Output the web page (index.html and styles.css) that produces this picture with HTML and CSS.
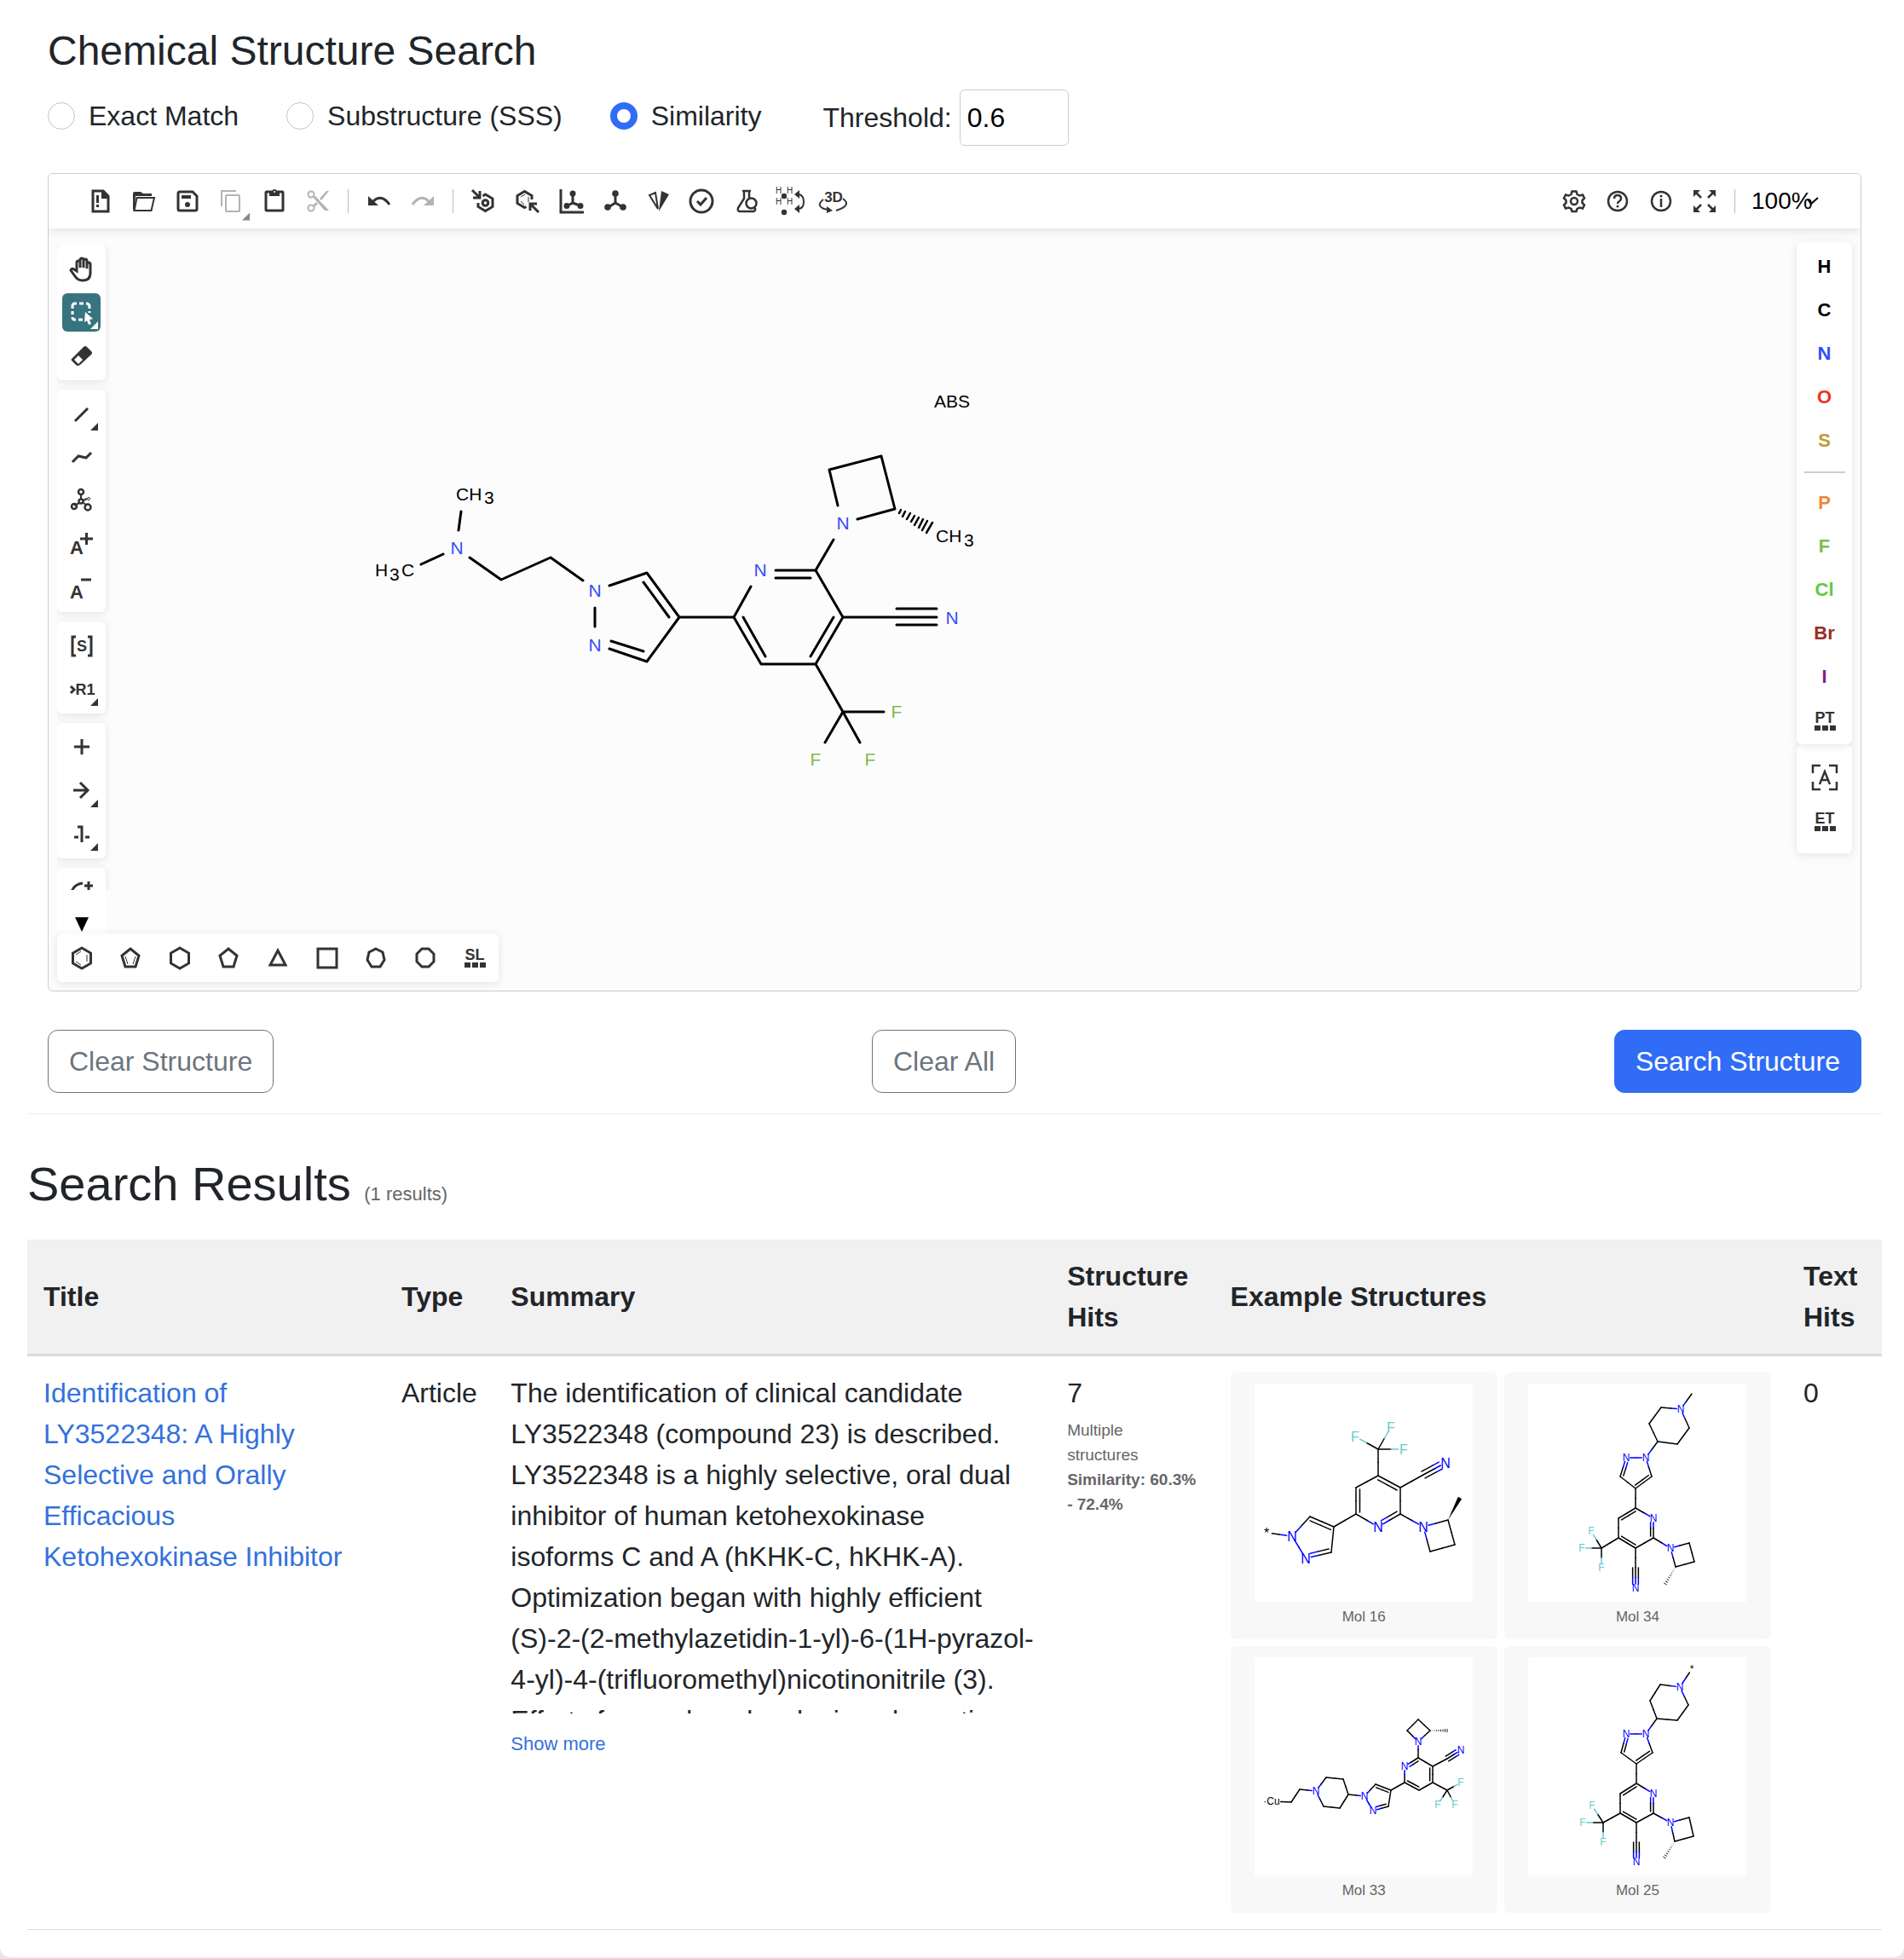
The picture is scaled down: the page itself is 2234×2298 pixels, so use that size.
FILE: index.html
```html
<!DOCTYPE html>
<html lang="en">
<head>
  <meta charset="UTF-8" />
  <meta name="viewport" content="width=device-width, initial-scale=1.0"/>
  <title>Chemical Structure Search</title>
  <link rel="stylesheet" href="styles.css">
</head>
<body>
  <main class="page">
    <section class="search-panel">
      <h2>Chemical Structure Search</h2>

      <div class="search-options">
        <label class="radio-option"><input type="radio" name="searchType" value="exact"> Exact Match</label>
        <label class="radio-option"><input type="radio" name="searchType" value="sss"> Substructure (SSS)</label>
        <label class="radio-option"><input type="radio" name="searchType" value="similarity" checked> Similarity</label>
        <div class="threshold">
          <label for="threshold">Threshold:</label>
          <input type="number" id="threshold" value="0.6" min="0" max="1" step="0.1">
        </div>
      </div>

      <div class="editor">
        <!-- Top toolbar -->
        <div class="toolbar">
          <button class="tool" aria-label="Clear canvas"><svg class="icon" viewBox="0 0 30 30"><path class="line bold" d="M6 3h12l6 6v18H6z"/><path class="solid" d="M16 2v10h9V9l-6-7zM10 8h3v9h-3zM10 19h3v3h-3z"/></svg></button>
          <button class="tool" aria-label="Open"><svg class="icon" viewBox="0 0 30 30"><path class="solid" d="M2 6q0-2 2-2h7l3 2h10v3H5l-1 17q-2 0-2-2z"/><path class="line" d="M6.500 11h20.500l-3.500 15H3.500z"/></svg></button>
          <button class="tool" aria-label="Save"><svg class="icon" viewBox="0 0 30 30"><path class="line bold" d="M6 4h15l5 5v15q0 2-2 2H6q-2 0-2-2V6q0-2 2-2z"/><path class="solid" d="M8 8h11v4H8z"/><circle class="solid" cx="15" cy="19" r="3"/></svg></button>
          <button class="tool has-menu disabled" aria-label="Copy"><svg class="icon" viewBox="0 0 30 30"><path class="line" d="M4 21V3h17M10 8h14q1 0 1 1v17q0 1-1 1H10q-1 0-1-1V9q0-1 1-1z"/></svg></button>
          <button class="tool" aria-label="Paste"><svg class="icon" viewBox="0 0 30 30"><path class="line bold" d="M6 4h18q1 0 1 1v20q0 1-1 1H6q-1 0-1-1V5q0-1 1-1z"/><path class="solid" d="M9 3h3q1-2 3-2t3 2h3v6H9z"/><circle cx="15" cy="4" r="1" fill="#fff"/></svg></button>
          <button class="tool disabled" aria-label="Cut"><svg class="icon" viewBox="0 0 30 30"><circle class="line" cx="7" cy="7" r="3.500"/><circle class="line" cx="7" cy="23" r="3.500"/><path class="solid" d="M9 10l3-1 16 17h-5zM9 20l4-4 2 2-4 4zM17 12l8-9h3L19 14z"/></svg></button>
          <span class="divider"></span>
          <button class="tool" aria-label="Undo"><svg class="icon" viewBox="0 0 30 30"><path class="line bold" d="M8 15q10-9 19 4"/><path class="solid" d="M2 9v11h12z"/></svg></button>
          <button class="tool disabled" aria-label="Redo"><svg class="icon" viewBox="0 0 30 30"><path class="line bold" d="M22 15q-10-9-19 4"/><path class="solid" d="M28 9v11H16z"/></svg></button>
          <span class="divider"></span>
          <button class="tool" aria-label="Layout"><svg class="icon" viewBox="0 0 30 30"><path class="line bold" d="M1 2l8 8M10 3v8H2M8 17v4.500l8.500 5 8.500-5v-9.500l-8.500-5-3 2"/><circle class="line bold" cx="16.500" cy="17" r="3.300"/></svg></button>
          <button class="tool" aria-label="Clean up"><svg class="icon" viewBox="0 0 30 30"><path class="line bold" d="M20 13V8.500l-8.500-5-8.500 5v9l8.500 5 2-1M28 28l-9-9M18 26v-8h8"/><path class="line thin" d="M7 10l5-3M7 15l4 4M16 10v6"/></svg></button>
          <button class="tool" aria-label="Aromatize"><svg class="icon" viewBox="0 0 30 30"><path class="line bold" d="M3 1v27h27M17 7v10l-6 3M17 17l8 3"/><circle class="solid" cx="17" cy="6" r="3.500"/><circle class="solid" cx="10" cy="20.500" r="3.500"/><circle class="solid" cx="26" cy="20.500" r="3.500"/></svg></button>
          <button class="tool" aria-label="Dearomatize"><svg class="icon" viewBox="0 0 30 30"><path class="line bold" d="M16 7v10l-8 5M16 17l9 5"/><circle class="solid" cx="16" cy="6" r="3.800"/><circle class="solid" cx="7" cy="22" r="3.800"/><circle class="solid" cx="25" cy="22" r="3.800"/></svg></button>
          <button class="tool" aria-label="Calculate CIP"><svg class="icon" viewBox="0 0 30 30"><path class="line" d="M5 8l7-3 3 19z"/><path class="solid" d="M19 3l9 4-12 20z"/></svg></button>
          <button class="tool" aria-label="Check structure"><svg class="icon" viewBox="0 0 30 30"><circle class="line bold" cx="15" cy="15" r="13"/><path class="line bold" d="M10 15l4 4 7-8"/></svg></button>
          <button class="tool" aria-label="Calculated values"><svg class="icon" viewBox="0 0 30 30"><path class="line medium" d="M12 3h10M14 3v9L7 23q-1 4 2 4h15q4 0 3-4M20 3v8"/><circle class="line medium" cx="22.500" cy="17.500" r="6"/></svg></button>
          <button class="tool" aria-label="Add or remove explicit hydrogens"><svg class="icon" viewBox="0 0 30 30"><text class="hydrogen" x="0" y="6">H</text><text class="hydrogen" x="13" y="6">H</text><text class="hydrogen" x="0" y="19">H</text><text class="hydrogen" x="13" y="19">H</text><circle class="solid" cx="10" cy="9" r="3.200"/><circle class="solid" cx="10" cy="28" r="3.200"/><path class="line" d="M26 7q7 0 7 8.500T26 24"/><path class="solid" d="M22 7l6-5v10zM22 24l6-5v10z"/></svg></button>
          <button class="tool" aria-label="3D viewer"><svg class="icon" viewBox="0 0 30 30"><text class="glyph" x="17" y="16" font-size="17">3D</text><path class="line" d="M5 13Q-4 20 6 24l5 1M28 12q11 8-8 14"/><path class="solid" d="M9 21l7 5-7 3z"/></svg></button>

          <span class="spacer"></span>

          <button class="tool" aria-label="Settings"><svg class="icon" viewBox="0 0 30 30"><path class="line medium" d="M12.500 3.500h5l1 3.500 3 1.500 3.500-1 2 4-2.500 2.500v3l2.500 2.500-2 4-3.500-1-3 1.500-1 3h-5l-1-3-3-1.500-3.500 1-2-4L5.500 17v-3L3 11.500l2-4 3.500 1 3-1.500z"/><circle class="line medium" cx="15" cy="15" r="4"/></svg></button>
          <button class="tool" aria-label="Help"><svg class="icon" viewBox="0 0 30 30"><circle class="line medium" cx="15" cy="15" r="11"/><path class="line medium" d="M11 12q0-4 4-4t4 4q0 2-2 3t-2 3"/><circle class="solid" cx="15" cy="21" r="1.500"/></svg></button>
          <button class="tool" aria-label="About"><svg class="icon" viewBox="0 0 30 30"><circle class="line medium" cx="15" cy="15" r="11"/><path class="line medium" d="M15 12v10"/><circle class="solid" cx="15" cy="9" r="1.500"/></svg></button>
          <button class="tool" aria-label="Fullscreen"><svg class="icon" viewBox="0 0 30 30"><path class="line medium" d="M4 4l7 7M26 4l-7 7M4 26l7-7M26 26l-7-7"/><path class="solid" d="M2 2h8l-3 3-2 2-3 3zM28 2h-8l8 8zM2 28h8l-8-8zM28 28h-8l8-8z"/></svg></button>
          <span class="divider"></span>
          <div class="zoom">
            <select aria-label="Zoom">
              <option>100%</option>
            </select>
            <svg class="zoom-arrow" viewBox="0 0 14 10"><path class="line" d="M1 3l4 5 8-7"/></svg>
          </div>
        </div>

        <div class="workspace">
          <!-- Left tools -->
          <div class="left-tools">
            <div class="tool-scroll">
              <div class="tool-group">
                <button class="tool" aria-label="Hand"><svg class="icon" viewBox="0 0 30 30"><path class="line bold" d="M9 17V7q0-2 2-2t2 2v6V4q0-2 2-2t2 2v9V5q0-2 2-2t2 2v9V9q0-2 2-2t2 2v10q0 9-9 9-6 0-9-5l-5-7q1-3 4-1z"/></svg></button>
                <button class="tool active has-menu" aria-label="Rectangle selection"><svg class="icon" viewBox="0 0 30 30"><path class="line bold" d="M4 10V7q0-3 3-3h2M12 4h5M20 4q4 0 4 4v2M4 13v4M4 20q0 3 3 3h1M11 23h5M24 13v2"/><path class="solid" d="M19 14l9 8-4 1 2 5-3 1-2-5-3 2z"/></svg></button>
                <button class="tool" aria-label="Erase"><svg class="icon" viewBox="0 0 30 30"><path class="solid" d="M3 18L17 4q2-2 4 0l5 5q2 2 0 4L13 25q-3 2-5 0l-5-5q-1-1 0-2z"/><path d="M6 19l5-5 5 5-5 5z" fill="#fff"/></svg></button>
              </div>
              <div class="tool-group">
                <button class="tool has-menu" aria-label="Single bond"><svg class="icon" viewBox="0 0 30 30"><path class="line bold" d="M7 23L22 8"/></svg></button>
                <button class="tool" aria-label="Chain"><svg class="icon" viewBox="0 0 30 30"><path class="line bold" d="M4 20l7-7 9 2 6-6"/></svg></button>
                <button class="tool" aria-label="Stereochemistry"><svg class="icon" viewBox="0 0 30 30"><path class="line" d="M14 7v6M12 17l-6 3M17 17l4 3M17 14l4-2"/><circle class="line medium" cx="14" cy="4" r="3"/><circle class="line medium" cx="14" cy="15" r="2.500"/><circle class="line medium" cx="6" cy="21" r="3"/><circle class="line medium" cx="22" cy="22" r="3.500"/><circle class="line thin" cx="23" cy="12" r="1.500"/></svg></button>
                <button class="tool" aria-label="Charge plus"><svg class="icon" viewBox="0 0 30 30"><text class="glyph" x="9" y="26" font-size="22">A</text><path class="line bold" d="M13 8h15M20.500 1v14"/></svg></button>
                <button class="tool" aria-label="Charge minus"><svg class="icon" viewBox="0 0 30 30"><text class="glyph" x="9" y="27" font-size="22">A</text><path class="line bold" d="M14 5h12"/></svg></button>
              </div>
              <div class="tool-group">
                <button class="tool" aria-label="S-group"><svg class="icon" viewBox="0 0 30 30"><path class="line bold" d="M8 4H4v22h4M22 4h4v22h-4"/><text class="glyph" x="15" y="21" font-size="18">S</text></svg></button>
                <button class="tool has-menu" aria-label="R-group"><svg class="icon" viewBox="0 0 30 30"><path class="line bold" d="M2 11l4 4-4 4"/><text class="glyph" x="19" y="21" font-size="18">R1</text></svg></button>
              </div>
              <div class="tool-group">
                <button class="tool" aria-label="Reaction plus"><svg class="icon" viewBox="0 0 30 30"><path class="line bold" d="M6 14h18M15 5v18"/></svg></button>
                <button class="tool has-menu" aria-label="Arrow"><svg class="icon" viewBox="0 0 30 30"><path class="line bold" d="M5 14h17M13 5l9 9-9 9"/></svg></button>
                <button class="tool has-menu" aria-label="Reaction mapping"><svg class="icon" viewBox="0 0 30 30"><path class="line bold" d="M6 18h5M19 18h5M10 6h5v18"/></svg></button>
              </div>
              <div class="tool-group">
                <button class="tool" aria-label="Shapes"><svg class="icon" viewBox="0 0 30 30"><path class="line bold" d="M3 14q3-9 13-10M18 7h10M23 2v10"/></svg></button>
              </div>
            </div>
            <button class="scroll-down" aria-label="Scroll down"><svg viewBox="0 0 16 17"><path d="M0 0h16L8 17z"/></svg></button>
          </div>

          <!-- Drawing area -->
          <svg class="canvas">
            <g class="bonds" transform="translate(-130 -268)">
              <path d="M538 622L541 600M494 662L520 650M551 654L588 680L646 654L684 681"/>
              <path d="M715 687L759 672L797 724L759 776L715 761M755 683L785 724M717 752L755 764M698 713V735"/>
              <path d="M797 724H861L881 688M910 669H957L989 724L957 779H893L861 724M910 678H951M978 724L951 770M872 724L898 770"/>
              <path d="M989 724H1099M1052 714H1099M1052 733H1099"/>
              <path d="M957 669L978 633M983 593L973 551L1034 535L1050 597L1006 609"/>
              <path d="M957 779L989 835H1037M989 835L968 871M989 835L1009 871"/>
              <path class="hash" d="M1055 602L1057 598M1059 606L1062 600M1064 609L1068 602M1069 612L1073 605M1073 616L1078 607M1078 619L1083 609M1082 622L1088 611M1087 625L1094 613"/>
            </g>
            <g class="atoms" transform="translate(-130 -268)">
              <text x="535" y="587">CH</text><text x="568" y="591">3</text>
              <text x="440" y="676">H</text><text x="457" y="681">3</text><text x="471" y="676">C</text>
              <text x="1098" y="636">CH</text><text x="1131" y="641">3</text>
              <text x="1096" y="478">ABS</text>
              <g class="nitrogen">
                <text x="536" y="650">N</text>
                <text x="698" y="700">N</text>
                <text x="698" y="764">N</text>
                <text x="892" y="676">N</text>
                <text x="989" y="621">N</text>
                <text x="1117" y="732">N</text>
              </g>
              <g class="fluorine">
                <text x="1052" y="842">F</text>
                <text x="957" y="898">F</text>
                <text x="1021" y="898">F</text>
              </g>
            </g>
          </svg>

          <!-- Atoms -->
          <div class="right-tools">
            <div class="atom-group">
              <button class="tool atom">H</button>
              <button class="tool atom">C</button>
              <button class="tool atom n">N</button>
              <button class="tool atom o">O</button>
              <button class="tool atom s">S</button>
              <hr>
              <button class="tool atom p">P</button>
              <button class="tool atom f">F</button>
              <button class="tool atom cl">Cl</button>
              <button class="tool atom br">Br</button>
              <button class="tool atom i">I</button>
              <button class="tool" aria-label="Periodic table"><svg class="icon" viewBox="0 0 30 30"><text class="glyph" x="15" y="18" font-size="18">PT</text><path class="solid" d="M3 21h7v6H3zM12 21h7v6h-7zM21 21h7v6h-7z"/></svg></button>
            </div>
            <div class="atom-group extended">
              <button class="tool" aria-label="Any atom"><svg class="icon" viewBox="0 0 30 30"><path class="line medium" d="M1 10V1h9M20 1h9v9M1 20v9h9M20 29h9v-9"/><path class="line medium" d="M9 23l6-15 6 15M11 18h8"/></svg></button>
              <button class="tool" aria-label="Extended table"><svg class="icon" viewBox="0 0 30 30"><text class="glyph" x="15" y="18" font-size="18">ET</text><path class="solid" d="M3 21h7v6H3zM12 21h7v6h-7zM21 21h7v6h-7z"/></svg></button>
            </div>
          </div>
        </div>

        <!-- Templates -->
        <div class="templates">
          <button class="tool" aria-label="Benzene"><svg class="icon" viewBox="0 0 30 30"><path class="line bold" d="M15 3l10.500 6v12L15 27 4.500 21V9z"/><path class="line thin" d="M8 11l6-4M21 11v8M14 23l-6-4"/></svg></button>
          <button class="tool" aria-label="Cyclopentadiene"><svg class="icon" viewBox="0 0 30 30"><path class="line bold" d="M15 4l10 8-4 13H9L5 12z"/><path class="line thin" d="M9 13l3 9M21 13l-3 9"/></svg></button>
          <button class="tool" aria-label="Cyclohexane"><svg class="icon" viewBox="0 0 30 30"><path class="line bold" d="M15 3l10.500 6v12L15 27 4.500 21V9z"/></svg></button>
          <button class="tool" aria-label="Cyclopentane"><svg class="icon" viewBox="0 0 30 30"><path class="line bold" d="M15 4l10 8-4 13H9L5 12z"/></svg></button>
          <button class="tool" aria-label="Cyclopropane"><svg class="icon" viewBox="0 0 30 30"><path class="line bold" d="M15 6l9 17H6z"/></svg></button>
          <button class="tool" aria-label="Cyclobutane"><svg class="icon" viewBox="0 0 30 30"><path class="line bold" d="M4 4h22v22H4z"/></svg></button>
          <button class="tool" aria-label="Cycloheptane"><svg class="icon" viewBox="0 0 30 30"><path class="line bold" d="M15 4l8 4 2 9-5 8H10l-5-8 2-9z"/></svg></button>
          <button class="tool" aria-label="Cyclooctane"><svg class="icon" viewBox="0 0 30 30"><path class="line bold" d="M11 4h8l6 6v9l-6 6h-8l-6-6v-9z"/></svg></button>
          <button class="tool" aria-label="Structure library"><svg class="icon" viewBox="0 0 30 30"><text class="glyph" x="15" y="17" font-size="18">SL</text><path class="solid" d="M3 20h7v6H3zM12 20h7v6h-7zM21 20h7v6h-7z"/></svg></button>
        </div>
      </div>

      <div class="actions">
        <button class="btn btn-outline">Clear Structure</button>
        <button class="btn btn-outline">Clear All</button>
        <button class="btn btn-primary">Search Structure</button>
      </div>
    </section>

    <section class="results">
      <h1>Search Results <small>(1 results)</small></h1>
      <table>
        <colgroup>
          <col class="col-title"><col class="col-type"><col class="col-summary">
          <col class="col-hits"><col class="col-examples"><col class="col-text">
        </colgroup>
        <thead>
          <tr><th>Title</th><th>Type</th><th>Summary</th><th>Structure Hits</th><th>Example Structures</th><th>Text Hits</th></tr>
        </thead>
        <tbody>
          <tr>
            <td><a href="#">Identification of LY3522348: A Highly Selective and Orally Efficacious Ketohexokinase Inhibitor</a></td>
            <td>Article</td>
            <td>
              <div class="summary">The identification of clinical candidate LY3522348 (compound 23) is described. LY3522348 is a highly selective, oral dual inhibitor of human ketohexokinase isoforms C and A (hKHK-C, hKHK-A). Optimization began with highly efficient (S)-2-(2-methylazetidin-1-yl)-6-(1H-pyrazol-4-yl)-4-(trifluoromethyl)nicotinonitrile (3). Efforts focused on developing absorption,</div>
              <a href="#" class="show-more">Show more</a>
            </td>
            <td>
              7
              <div class="hit-info">Multiple structures <strong>Similarity: 60.3% - 72.4%</strong></div>
            </td>
            <td>
              <div class="examples">
                <figure><svg class="mol" id="mol16" viewBox="0 0 256 256"></svg><figcaption>Mol 16</figcaption></figure>
                <figure><svg class="mol" id="mol34" viewBox="0 0 256 256"></svg><figcaption>Mol 34</figcaption></figure>
                <figure><svg class="mol" id="mol33" viewBox="0 0 256 256"></svg><figcaption>Mol 33</figcaption></figure>
                <figure><svg class="mol" id="mol25" viewBox="0 0 256 256"></svg><figcaption>Mol 25</figcaption></figure>
              </div>
            </td>
            <td>0</td>
          </tr>
        </tbody>
      </table>
    </section>
  </main>

  <script src="molecules.js"></script>
</body>
</html>
```

FILE: styles.css
```css
* { box-sizing: border-box; }
body { margin: 0; background: #e6e6e6; color: #212529; font-family: "Liberation Sans", Arial, sans-serif; font-size: 32px; line-height: 48px; }
button, input, select { font-family: inherit; font-size: inherit; }
button { cursor: pointer; }
a { color: #3471dc; text-decoration: none; }

.page { background: #fff; padding: 31px 26px 32px 32px; border-radius: 0 0 12px 12px; }

/* Search form */
.search-panel { padding: 0 24px 24px; border-bottom: 1px solid #eee; }
h2 { margin: 0 0 16px; font-size: 48px; line-height: 58px; font-weight: 500; }
.search-options { display: flex; align-items: center; gap: 56px; margin-bottom: 32px; }
.radio-option { display: flex; align-items: center; gap: 16px; padding-bottom: 4px; }
.radio-option input { appearance: none; width: 32px; height: 32px; margin: 0; border: 1px solid #c4c4c4; border-radius: 50%; background: #fff; }
.radio-option input:checked { border: 8px solid #306cf6; }
.threshold { display: flex; align-items: center; gap: 9px; margin-left: 16px; }
.threshold input { width: 128px; height: 66px; padding: 0 8px; border: 1px solid #ccc; border-radius: 6px; color: #000; background: #fff; }

/* Editor */
.editor { display: flex; flex-direction: column; height: 960px; border: 1px solid #ccc; border-radius: 6px; background: #fcfcfc; overflow: hidden; }
.toolbar { display: flex; align-items: center; flex: none; height: 64px; padding: 0 48px 0 35px; background: #fff; box-shadow: 0 2px 12px rgba(0,0,0,0.12); }
.tool { position: relative; display: flex; align-items: center; justify-content: center; flex: none; width: 45px; height: 45px; padding: 0; border: 0; border-radius: 6px; background: none; color: #333; }
.toolbar .tool { width: 51px; }
.tool.disabled { color: #b3b3b3; }
.tool.active { background: #38747f; color: #fff; }
.has-menu::after { content: ""; position: absolute; right: 3px; bottom: 3px; width: 9px; height: 9px; background: currentColor; clip-path: polygon(100% 0, 100% 100%, 0 100%); }
.toolbar .has-menu::after { bottom: 0; background: #888; }
.divider { width: 1px; height: 28px; margin: 0 10px; background: #b8bbd0; }
.spacer { flex: 1; }

.icon { width: 30px; height: 30px; overflow: visible; }
.line { fill: none; stroke: currentColor; stroke-width: 2; }
.medium { stroke-width: 2.5; }
.bold { stroke-width: 3; }
.thin { stroke-width: 1; }
.solid { fill: currentColor; }
.glyph { fill: currentColor; font-weight: 700; text-anchor: middle; }
.hydrogen { fill: currentColor; font-size: 10px; }

.zoom { position: relative; margin-left: 9px; }
.zoom select { display: block; width: 80px; padding: 0; border: 0; appearance: none; background: none; color: #000; font-size: 28px; line-height: 40px; }
.zoom-arrow { position: absolute; right: 1px; top: 15px; width: 14px; height: 10px; color: #000; pointer-events: none; }

.workspace { display: flex; flex: 1; min-height: 0; padding: 0 10px; }
.left-tools { display: flex; flex-direction: column; width: 63px; padding-top: 19px; }
.tool-scroll { display: flex; flex-direction: column; gap: 11px; flex: 1; min-height: 0; padding-right: 6px; overflow: hidden; }
.tool-group { display: flex; flex-direction: column; flex: none; gap: 6px; padding: 6px; border-radius: 6px; background: #fff; box-shadow: 0 2px 10px rgba(80,80,110,0.15); }
.scroll-down { display: flex; justify-content: center; align-items: flex-end; flex: none; width: 57px; height: 51px; padding: 0; border: 0; background: #fff; }
.scroll-down svg { width: 16px; height: 17px; margin-bottom: 2px; }
.canvas { flex: 1; min-width: 0; height: 100%; }
.bonds { fill: none; stroke: #000; stroke-width: 3; stroke-linecap: round; stroke-linejoin: round; }
.hash { stroke-width: 2.5; }
.atoms { font-size: 21px; }
.nitrogen { fill: #304ff7; text-anchor: middle; }
.fluorine { fill: #84b84c; text-anchor: middle; }

.right-tools { width: 65px; padding-top: 16px; }
.atom-group { position: relative; z-index: 1; display: flex; flex-direction: column; align-items: center; gap: 6px; padding: 6px; border-radius: 6px; background: #fff; box-shadow: 0 2px 10px rgba(80,80,110,0.15); }
.atom-group.extended { z-index: 0; padding: 16px 6px; }
.atom-group hr { width: 48px; height: 2px; margin: 8px 0 6px; border: 0; background: #cbcdda; }
.atom { color: #000; font-size: 22px; font-weight: 700; }
.atom.n { color: #304ff7; }
.atom.o { color: #eb3323; }
.atom.s { color: #c19a35; }
.atom.p { color: #ef8733; }
.atom.f { color: #84b84c; }
.atom.cl { color: #5fcb3f; }
.atom.br { color: #953029; }
.atom.i { color: #871b8f; }

.templates { display: flex; justify-content: space-between; align-items: center; flex: none; z-index: 1; width: 518px; height: 57px; margin: 0 10px 10px; padding: 0 6px; border-radius: 6px; background: #fff; box-shadow: 0 2px 10px rgba(80,80,110,0.15); }

/* Buttons */
.actions { display: flex; justify-content: space-between; margin-top: 45px; }
.btn { padding: 12px 24px; border: 1px solid #6c757d; border-radius: 12px; line-height: 48px; }
.btn-outline { background: #fff; color: #6c757d; }
.btn-primary { background: #306cf6; border-color: #306cf6; color: #fff; }

/* Results */
h1 { margin: 48px 0 32px; font-size: 56px; line-height: 67px; font-weight: 500; }
h1 small { color: #666; font-size: 22px; line-height: 22px; font-weight: 400; }
table { width: 100%; border-collapse: separate; border-spacing: 0; table-layout: fixed; }
th, td { padding: 19px; text-align: left; }
th { background: #f1f1f1; border-bottom: 3px solid #dbdbdb; vertical-align: middle; }
td { border-bottom: 1px solid #ddd; vertical-align: top; }
.col-title { width: 19.3%; }
.col-type { width: 5.9%; }
.col-summary { width: 30%; }
.col-hits { width: 8.8%; }
.col-examples { width: 30.9%; }
.col-text { width: 5.1%; }
.summary { max-height: 400px; overflow: hidden; }
.show-more { display: block; margin-top: 19px; font-size: 22px; line-height: 33px; }
.hit-info { margin-top: 5px; color: #666; font-size: 19px; line-height: 29px; }
.hit-info strong { display: block; }
.examples { display: grid; grid-template-columns: 1fr 1fr; gap: 8px; }
figure { margin: 0; padding: 13px 0; border-radius: 6px; background: #f8f8f8; text-align: center; }
figcaption { margin-top: 5px; color: #666; font-size: 17px; line-height: 26px; }
.mol { display: block; width: 256px; height: 256px; margin: 0 auto; background: #fff; }
.mol line { stroke-width: 1.5; stroke-linecap: round; }
.mol text { text-anchor: middle; dominant-baseline: central; }
```

FILE: molecules.js
```js
const colors = { N: "#0000ff", F: "#6cc", C: "#000" };

// atoms: [symbol, x, y], bonds: [from, to, type]
const molecules = {
  mol16: {
    size: 16,
    atoms: [
      ["C", 145, 77], ["F", 118, 62], ["F", 160, 51], ["F", 175, 77],
      ["C", 145, 108], ["C", 171, 122], ["C", 171, 153], ["N", 145, 168], ["C", 119, 153], ["C", 119, 122],
      ["C", 198, 107], ["N", 224, 93],
      ["N", 198, 168], ["C", 227, 160], ["C", 235, 189], ["C", 206, 197], ["C", 241, 134],
      ["C", 93, 168], ["C", 65, 156], ["N", 44, 179], ["N", 60, 205], ["C", 90, 198], ["*", 14, 175]
    ],
    bonds: [
      [0, 1], [0, 2], [0, 3], [0, 4], [4, 5, 2], [5, 6], [6, 7, 2], [7, 8], [8, 9, 2], [9, 4],
      [5, 10], [10, 11, 3], [6, 12], [12, 13], [13, 14], [14, 15], [15, 12], [13, 16, "wedge"],
      [8, 17], [17, 18, 2], [18, 19], [19, 20], [20, 21, 2], [21, 17], [19, 22]
    ]
  },
  mol34: {
    size: 12,
    atoms: [
      ["C", 192, 12], ["N", 179, 30], ["C", 156, 28], ["C", 142, 47], ["C", 152, 68], ["C", 175, 71], ["C", 189, 52],
      ["N", 138, 87], ["N", 115, 87], ["C", 108, 109], ["C", 126, 123], ["C", 145, 109],
      ["C", 126, 146], ["N", 147, 158], ["C", 147, 181], ["C", 126, 193], ["C", 106, 181], ["C", 106, 158],
      ["C", 86, 193], ["F", 74, 173], ["F", 63, 193], ["F", 86, 216], ["C", 126, 216], ["N", 126, 240],
      ["N", 167, 193], ["C", 189, 187], ["C", 195, 209], ["C", 173, 215], ["C", 161, 235]
    ]
  },
  mol33: {
    size: 12,
    atoms: [
      ["N", 192, 99], ["C", 179, 86], ["C", 192, 73], ["C", 206, 86], ["C", 226, 86],
      ["C", 192, 118], ["C", 209, 128], ["C", 209, 147], ["C", 193, 156], ["C", 176, 147], ["N", 176, 128],
      ["C", 226, 119], ["N", 242, 109], ["C", 226, 156], ["F", 242, 147], ["F", 215, 173], ["F", 235, 173],
      ["C", 160, 156], ["C", 142, 149], ["N", 129, 163], ["N", 139, 180], ["C", 157, 175],
      ["C", 110, 161], ["C", 104, 143], ["C", 84, 141], ["N", 72, 157], ["C", 81, 175], ["C", 100, 177],
      ["C", 53, 155], ["C", 43, 170], ["·Cu", 20, 169]
    ],
    bonds: [
      [0, 1], [1, 2], [2, 3], [3, 0], [3, 4, "hash"], [0, 5], [5, 6], [6, 7, 2], [7, 8], [8, 9, 2], [9, 10], [10, 5, 2],
      [6, 11], [11, 12, 3], [7, 13], [13, 14], [13, 15], [13, 16], [9, 17],
      [17, 18, 2], [18, 19], [19, 20], [20, 21, 2], [21, 17],
      [19, 22], [22, 23], [23, 24], [24, 25], [25, 26], [26, 27], [27, 22], [25, 28], [28, 29], [29, 30]
    ]
  },
  mol25: {
    size: 12,
    atoms: [
      ["*", 192, 14], ["N", 178, 35], ["C", 155, 32], ["C", 143, 51], ["C", 151, 72], ["C", 175, 74], ["C", 188, 56],
      ["N", 138, 90], ["N", 115, 90], ["C", 109, 112], ["C", 127, 125], ["C", 146, 112],
      ["C", 127, 148], ["N", 147, 160], ["C", 147, 183], ["C", 127, 194], ["C", 108, 183], ["C", 108, 160],
      ["C", 88, 194], ["F", 75, 174], ["F", 64, 194], ["F", 88, 217], ["C", 127, 217], ["N", 127, 240],
      ["N", 167, 194], ["C", 189, 188], ["C", 194, 210], ["C", 172, 216], ["C", 160, 235]
    ]
  }
};

// mol 34 and mol 25 share one skeleton
molecules.mol34.bonds = molecules.mol25.bonds = [
  [0, 1], [1, 2], [2, 3], [3, 4], [4, 5], [5, 6], [6, 1], [4, 7],
  [7, 8], [8, 9, 2], [9, 10], [10, 11, 2], [11, 7], [10, 12],
  [12, 13], [13, 14, 2], [14, 15], [15, 16, 2], [16, 17], [17, 12, 2],
  [16, 18], [18, 19], [18, 20], [18, 21], [15, 22], [22, 23, 3],
  [14, 24], [24, 25], [25, 26], [26, 27], [27, 24], [27, 28, "hash"]
];

function line(x1, y1, x2, y2, color) {
  return `<line x1="${x1}" y1="${y1}" x2="${x2}" y2="${y2}" stroke="${color}"/>`;
}

function drawBond(a, b, type, size) {
  let [sa, x1, y1] = a;
  let [sb, x2, y2] = b;
  const len = Math.hypot(x2 - x1, y2 - y1);
  const ux = (x2 - x1) / len, uy = (y2 - y1) / len;
  const nx = -uy, ny = ux;
  const mx = (x1 + x2) / 2, my = (y1 + y2) / 2;
  const ca = colors[sa] || "#000", cb = colors[sb] || "#000";

  if (type === "wedge") {
    return `<path d="M${x1} ${y1}L${x2 + nx * 2.5} ${y2 + ny * 2.5}L${x2 - nx * 2.5} ${y2 - ny * 2.5}z"/>`;
  }
  if (type === "hash") {
    let out = "";
    for (let i = 1; i <= 8; i++) {
      const x = x1 + (x2 - x1) * i / 8, y = y1 + (y2 - y1) * i / 8, w = i * 0.25;
      out += `<path d="M${x - nx * w} ${y - ny * w}L${x + nx * w} ${y + ny * w}" stroke="#000" stroke-width="0.9"/>`;
    }
    return out;
  }

  // keep lines clear of the letters
  const trim = s => s === "C" ? 0 : s.length > 1 ? size * 0.9 : size * 0.4;
  x1 += ux * trim(sa); y1 += uy * trim(sa);
  x2 -= ux * trim(sb); y2 -= uy * trim(sb);

  const gap = size * 0.28;
  const offsets = type === 2 ? [0, gap] : type === 3 ? [-gap, 0, gap] : [0];
  return offsets.map(o => {
    const inset = type === 2 && o ? 2 : 0;
    const s1 = sa === "C" ? inset : 0, s2 = sb === "C" ? inset : 0;
    const cx = mx + nx * o, cy = my + ny * o;
    return line(x1 + nx * o + ux * s1, y1 + ny * o + uy * s1, cx, cy, ca)
      + line(cx, cy, x2 + nx * o - ux * s2, y2 + ny * o - uy * s2, cb);
  }).join("");
}

// turns a double bond so that its second line falls inside the ring
function ringSide(mol, bond) {
  const [i, j, type] = bond;
  if (type !== 2) return bond;
  let paths = [[j]];
  let ring = null;
  while (!ring && paths.length) {
    const next = [];
    for (const p of paths) {
      const last = p[p.length - 1];
      for (const b of mol.bonds) {
        if (b === bond || (b[0] !== last && b[1] !== last)) continue;
        const n = b[0] === last ? b[1] : b[0];
        if (n === i) { ring = [...p, i]; break; }
        if (!p.includes(n)) next.push([...p, n]);
      }
      if (ring) break;
    }
    paths = next;
  }
  const cx = ring.reduce((t, k) => t + mol.atoms[k][1], 0) / ring.length;
  const cy = ring.reduce((t, k) => t + mol.atoms[k][2], 0) / ring.length;
  const [, x1, y1] = mol.atoms[i], [, x2, y2] = mol.atoms[j];
  return (x2 - x1) * (cy - y1) - (y2 - y1) * (cx - x1) < 0 ? [j, i, type] : bond;
}

Object.entries(molecules).forEach(([id, mol]) => {
  let out = mol.bonds.map(b => {
    const [i, j, type] = ringSide(mol, b);
    return drawBond(mol.atoms[i], mol.atoms[j], type, mol.size);
  }).join("");
  mol.atoms.forEach(([s, x, y]) => {
    if (s !== "C") out += `<text x="${x}" y="${y}" font-size="${mol.size}" fill="${colors[s] || "#000"}">${s}</text>`;
  });
  document.getElementById(id).innerHTML = out;
});
```
